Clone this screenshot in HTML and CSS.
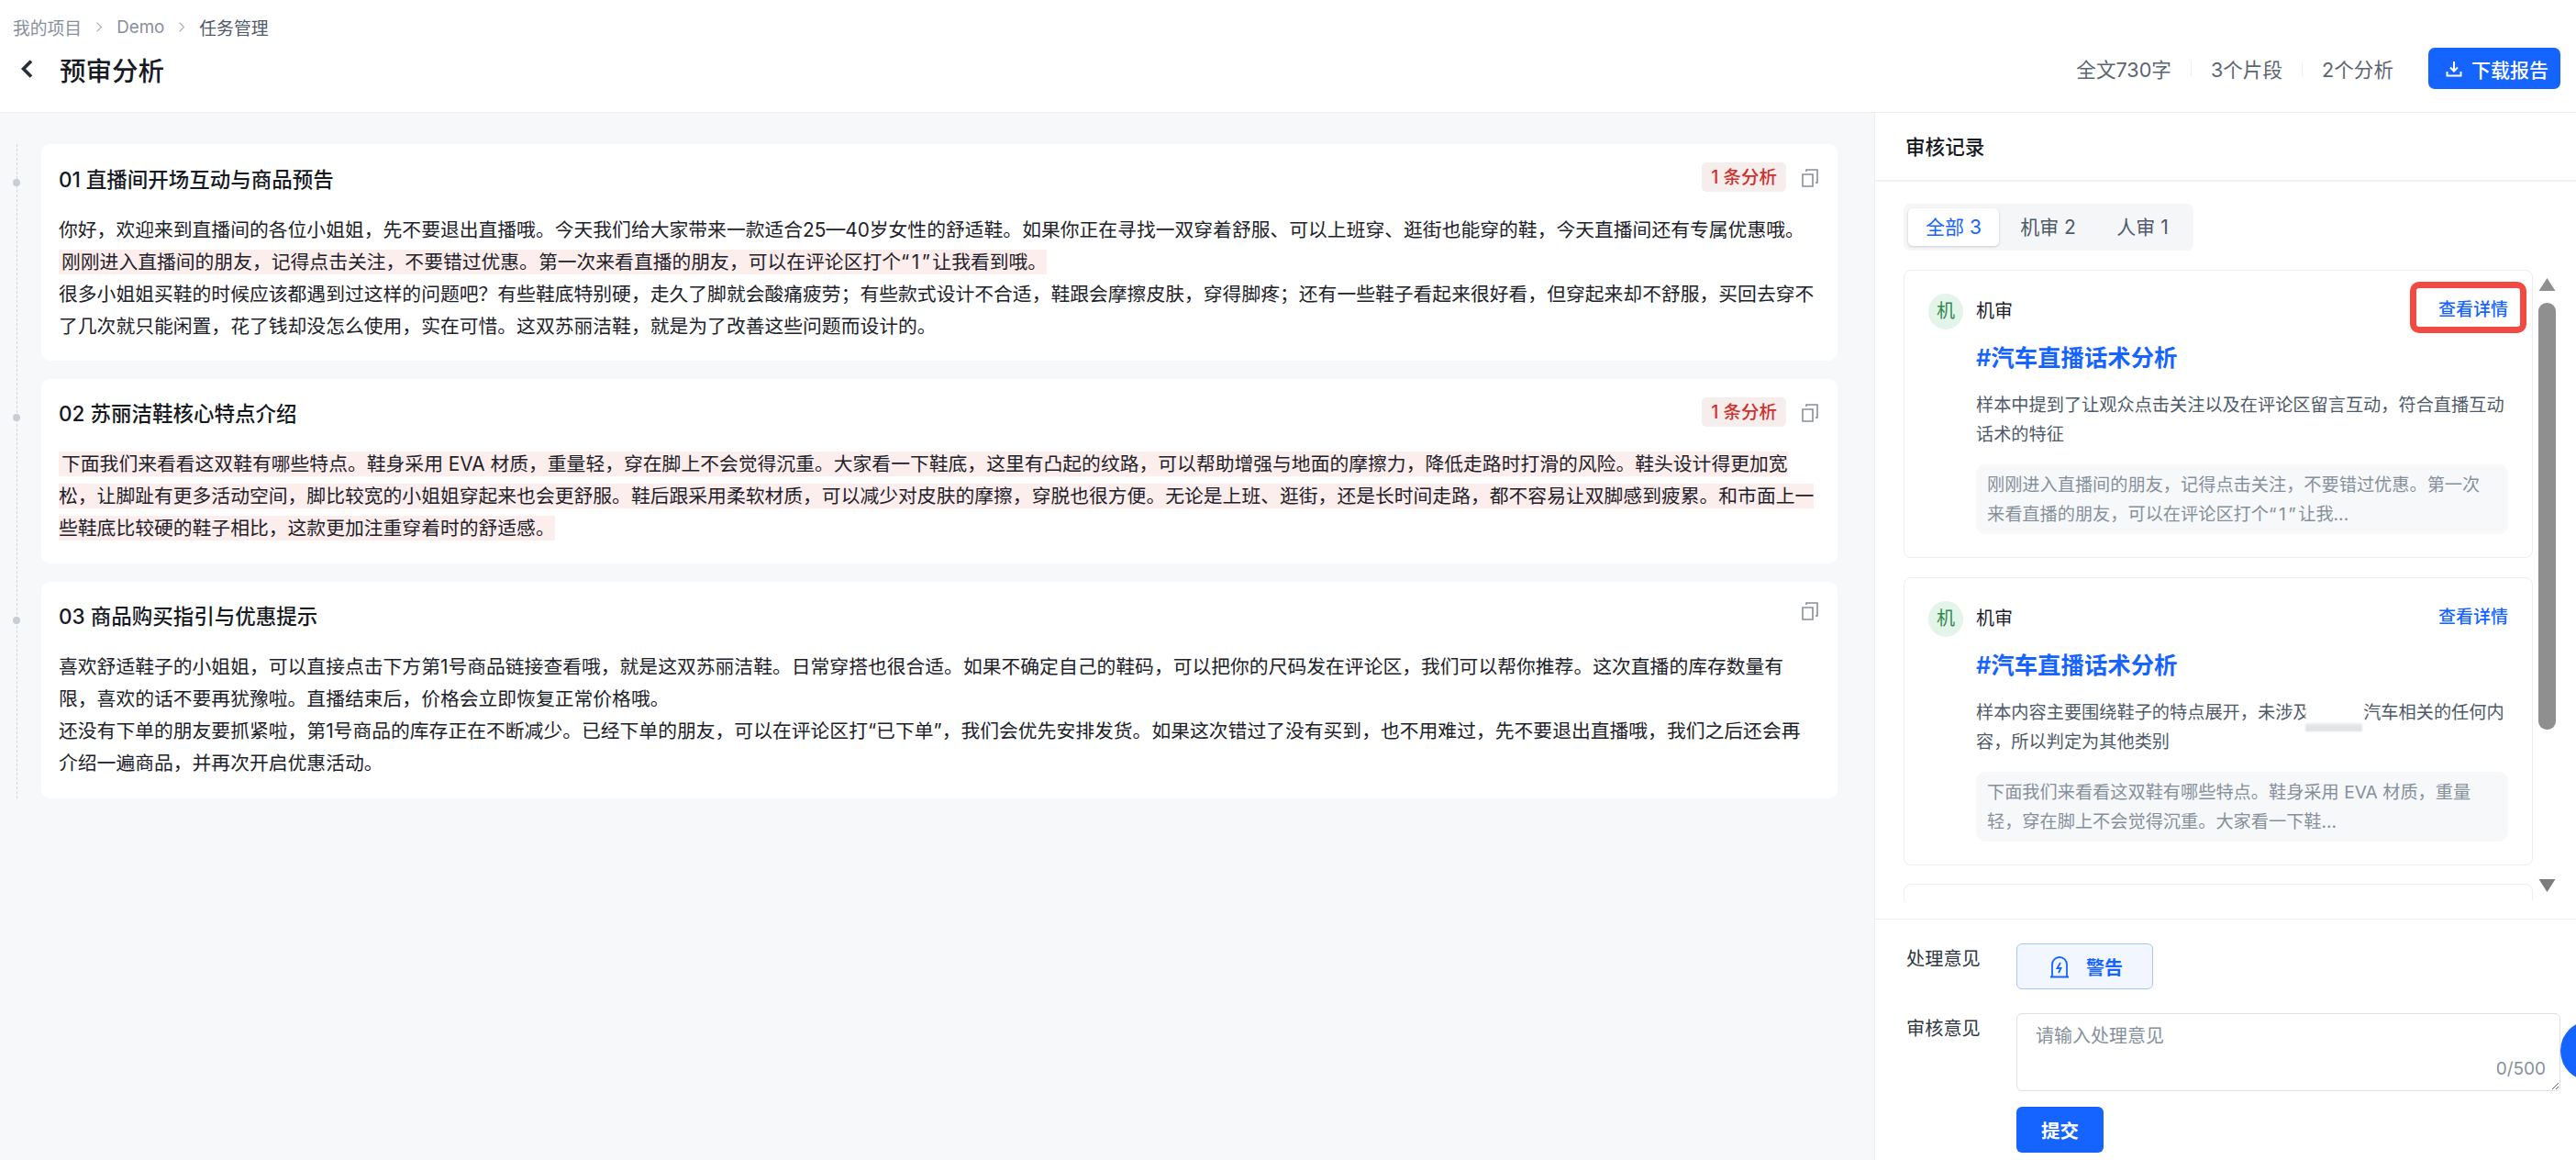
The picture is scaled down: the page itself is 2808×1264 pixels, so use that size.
FILE: index.html
```html
<!DOCTYPE html>
<html lang="zh-CN">
<head>
    <meta charset="UTF-8">
    <title>预审分析</title>
    <link rel="stylesheet" href="styles.css">
</head>
<body>
    <header class="top-bar">
        <div class="top-left">
            <div class="breadcrumb">
                <span>我的项目</span>
                <svg class="crumb-sep" viewBox="0 0 10 16"><path d="M2 2l6 6-6 6"/></svg>
                <span>Demo</span>
                <svg class="crumb-sep" viewBox="0 0 10 16"><path d="M2 2l6 6-6 6"/></svg>
                <span class="crumb-current">任务管理</span>
            </div>
            <div class="page-title">
                <svg class="back-icon" viewBox="0 0 14 20"><path d="M12 1.5L3.5 10l8.5 8.5"/></svg>
                <h1>预审分析</h1>
            </div>
        </div>
        <div class="top-right">
            <span class="stat">全文730字</span>
            <i class="stat-sep"></i>
            <span class="stat">3个片段</span>
            <i class="stat-sep"></i>
            <span class="stat">2个分析</span>
            <button class="download-btn">
                <svg viewBox="0 0 18 18"><path d="M9 1v10M5 7.5L9 11.5l4-4M1.5 12v4.5h15V12"/></svg>
                下载报告
            </button>
        </div>
    </header>

    <main class="workspace">
        <section class="content">
            <div class="segments">
                <article class="segment">
                    <div class="segment-head">
                        <h2>01 直播间开场互动与商品预告</h2>
                        <span class="badge">1 条分析</span>
                        <svg class="copy-icon" viewBox="0 0 18 20"><path d="M1 6h11v13H1zM5 3V1h12v14h-2"/></svg>
                    </div>
                    <p>你好，欢迎来到直播间的各位小姐姐，先不要退出直播哦。今天我们给大家带来一款适合25—40岁女性的舒适鞋。如果你正在寻找一双穿着舒服、可以上班穿、逛街也能穿的鞋，今天直播间还有专属优惠哦。<br><mark>刚刚进入直播间的朋友，记得点击关注，不要错过优惠。第一次来看直播的朋友，可以在评论区打个<span class="quoted">“1”</span>让我看到哦。</mark></p>
                    <p>很多小姐姐买鞋的时候应该都遇到过这样的问题吧？有些鞋底特别硬，走久了脚就会酸痛疲劳；有些款式设计不合适，鞋跟会摩擦皮肤，穿得脚疼；还有一些鞋子看起来很好看，但穿起来却不舒服，买回去穿不了几次就只能闲置，花了钱却没怎么使用，实在可惜。这双苏丽洁鞋，就是为了改善这些问题而设计的。</p>
                </article>
                <article class="segment">
                    <div class="segment-head">
                        <h2>02 苏丽洁鞋核心特点介绍</h2>
                        <span class="badge">1 条分析</span>
                        <svg class="copy-icon" viewBox="0 0 18 20"><path d="M1 6h11v13H1zM5 3V1h12v14h-2"/></svg>
                    </div>
                    <p><mark>下面我们来看看这双鞋有哪些特点。鞋身采用 EVA 材质，重量轻，穿在脚上不会觉得沉重。大家看一下鞋底，这里有凸起的纹路，可以帮助增强与地面的摩擦力，降低走路时打滑的风险。鞋头设计得更加宽松，让脚趾有更多活动空间，脚比较宽的小姐姐穿起来也会更舒服。鞋后跟采用柔软材质，可以减少对皮肤的摩擦，穿脱也很方便。无论是上班、逛街，还是长时间走路，都不容易让双脚感到疲累。和市面上一些鞋底比较硬的鞋子相比，这款更加注重穿着时的舒适感。</mark></p>
                </article>
                <article class="segment">
                    <div class="segment-head">
                        <h2>03 商品购买指引与优惠提示</h2>
                        <svg class="copy-icon solo" viewBox="0 0 18 20"><path d="M1 6h11v13H1zM5 3V1h12v14h-2"/></svg>
                    </div>
                    <p>喜欢舒适鞋子的小姐姐，可以直接点击下方第1号商品链接查看哦，就是这双苏丽洁鞋。日常穿搭也很合适。如果不确定自己的鞋码，可以把你的尺码发在评论区，我们可以帮你推荐。这次直播的库存数量有限，喜欢的话不要再犹豫啦。直播结束后，价格会立即恢复正常价格哦。</p>
                    <p>还没有下单的朋友要抓紧啦，第1号商品的库存正在不断减少。已经下单的朋友，可以在评论区打“已下单”，我们会优先安排发货。如果这次错过了没有买到，也不用难过，先不要退出直播哦，我们之后还会再介绍一遍商品，并再次开启优惠活动。</p>
                </article>
            </div>
        </section>

        <aside class="review-panel">
            <div class="panel-title">审核记录</div>
            <div class="tabs">
                <span class="tab active">全部 3</span>
                <span class="tab">机审 2</span>
                <span class="tab">人审 1</span>
            </div>

            <div class="records">
                <div class="record-list">
                    <div class="record">
                        <div class="record-head">
                            <span class="avatar">机</span>
                            <span class="record-name">机审</span>
                            <a class="record-link">查看详情</a>
                        </div>
                        <div class="record-body">
                            <div class="record-tag">#汽车直播话术分析</div>
                            <div class="record-desc">样本中提到了让观众点击关注以及在评论区留言互动，符合直播互动话术的特征</div>
                            <div class="record-quote">刚刚进入直播间的朋友，记得点击关注，不要错过优惠。第一次来看直播的朋友，可以在评论区打个<span class="quoted">“1”</span>让我...</div>
                        </div>
                        <i class="annotation"></i>
                    </div>
                    <div class="record">
                        <div class="record-head">
                            <span class="avatar">机</span>
                            <span class="record-name">机审</span>
                            <a class="record-link">查看详情</a>
                        </div>
                        <div class="record-body">
                            <div class="record-tag">#汽车直播话术分析</div>
                            <div class="record-desc">样本内容主要围绕鞋子的特点展开，未涉及<i class="redacted"></i>汽车相关的任何内容，所以判定为其他类别</div>
                            <div class="record-quote">下面我们来看看这双鞋有哪些特点。鞋身采用 EVA 材质，重量轻，穿在脚上不会觉得沉重。大家看一下鞋...</div>
                        </div>
                    </div>
                    <div class="record"></div>
                </div>
                <div class="scrollbar">
                    <svg class="scroll-arrow" viewBox="0 0 18 14"><path d="M9 0l9 14H0z"/></svg>
                    <div class="scroll-thumb"></div>
                    <svg class="scroll-arrow down" viewBox="0 0 18 14"><path d="M0 0h18L9 14z"/></svg>
                </div>
            </div>

            <form class="review-form">
                <label class="form-label">处理意见</label>
                <div>
                    <span class="action-chip">
                        <svg viewBox="0 0 22 25"><path d="M3 23V10a8 8 0 0 1 16 0v13M1 23.5h20M12 8l-3.5 6h4L10 19"/></svg>
                        警告
                    </span>
                </div>
                <label class="form-label">审核意见</label>
                <div class="textarea-wrap">
                    <textarea placeholder="请输入处理意见"></textarea>
                    <span class="counter">0/500</span>
                </div>
                <div class="form-actions">
                    <button class="submit-btn" type="button">提交</button>
                </div>
            </form>
        </aside>
    </main>

    <div class="float-ball"></div>
</body>
</html>
```

FILE: styles.css
```css
* {
    box-sizing: border-box;
}

html, body {
    height: 100%;
}

body {
    position: relative;
    margin: 0;
    overflow: hidden;
    background: #fff;
    color: #1d2129;
    font-family: Inter, "Noto Sans CJK SC", sans-serif;
}

/* top bar */
.top-bar {
    display: flex;
    justify-content: space-between;
    height: 123px;
    padding: 0 17px 0 14px;
    border-bottom: 1px solid #eceef1;
}

.breadcrumb {
    display: flex;
    align-items: center;
    height: 26px;
    margin-top: 16px;
    color: #86909c;
    font-size: 18.8px;
}

.crumb-sep {
    width: 8px;
    height: 13px;
    margin: 0 15px;
    fill: none;
    stroke: #a9aeb8;
    stroke-width: 1.5;
}

.crumb-current {
    color: #4e5969;
}

.page-title {
    display: flex;
    align-items: center;
    height: 38px;
    margin-top: 14px;
}

.back-icon {
    width: 14px;
    height: 20px;
    margin-left: 8px;
    fill: none;
    stroke: #272e3b;
    stroke-width: 3.6;
}

.page-title h1 {
    margin: 0 0 0 29px;
    color: #16191f;
    font-size: 28.5px;
    font-weight: 500;
}

.top-right {
    display: flex;
    align-items: center;
    align-self: flex-start;
    margin-top: 52px;
}

.stat {
    color: #5c6572;
    font-size: 21.6px;
}

.stat-sep {
    width: 1px;
    height: 16px;
    margin: 0 21px;
    background: #eceef1;
}

.download-btn {
    display: flex;
    align-items: center;
    gap: 10px;
    height: 45px;
    margin-left: 38px;
    padding: 0 13px 0 19px;
    border: none;
    border-radius: 7px;
    background: #1664ff;
    color: #fff;
    font-family: inherit;
    font-size: 21px;
    font-weight: 500;
}

.download-btn svg {
    width: 18px;
    height: 18px;
    fill: none;
    stroke: #fff;
    stroke-width: 2;
}

/* main area */
.workspace {
    display: flex;
    height: 1141px;
}

.content {
    width: 2043px;
    padding: 34px 40px 0 18px;
    background: #f7f8fa;
}

.segments {
    display: flex;
    flex-direction: column;
    gap: 20px;
    padding-left: 26px;
    border-left: 1px dashed #d3d6dc;
}

.segment {
    position: relative;
    padding: 20px 21px 20px 19px;
    border-radius: 10px;
    background: #fff;
}

.segment + .segment {
    padding-bottom: 21px;
}

.segment::before {
    content: "";
    position: absolute;
    left: -31px;
    top: 38px;
    width: 8px;
    height: 8px;
    border-radius: 50%;
    background: #c9cdd4;
}

.segment-head {
    display: flex;
    align-items: flex-start;
    height: 36px;
    margin-bottom: 20px;
}

.segment + .segment .segment-head {
    margin-bottom: 19px;
}

.segment-head h2 {
    flex: 1;
    margin: 1px 0 0;
    color: #16191f;
    font-size: 22.5px;
    font-weight: 500;
    line-height: 36px;
}

.segment + .segment h2 {
    margin-top: 0;
}

.badge {
    height: 32px;
    padding: 0 10px;
    border-radius: 5px;
    background: #f6eded;
    color: #d0312d;
    font-size: 19.5px;
    font-weight: 500;
    line-height: 32px;
}

.copy-icon {
    width: 18px;
    height: 20px;
    margin: 7px 0 0 17px;
    fill: none;
    stroke: #86909c;
    stroke-width: 1.6;
}

.copy-icon.solo {
    margin-top: 2px;
}

.segment p {
    margin: 0;
    color: #1d2129;
    font-size: 20.8px;
    line-height: 35px;
}

.segment mark {
    padding: 1px 0 1px 3px;
    background: #fdeeee;
    color: inherit;
}

.quoted {
    letter-spacing: 2.5px;
}

/* right panel */
.review-panel {
    display: flex;
    flex-direction: column;
    flex: 1;
    min-width: 0;
    border-left: 1px solid #eceef1;
}

.panel-title {
    flex: none;
    height: 75px;
    padding-left: 33px;
    border-bottom: 2px solid #eff1f4;
    color: #16191f;
    font-size: 21.6px;
    font-weight: 500;
    line-height: 75px;
}

.tabs {
    display: flex;
    flex: none;
    gap: 4px;
    align-self: flex-start;
    height: 51px;
    margin: 24px 0 0 31px;
    padding: 5px 6px 5px 5px;
    border-radius: 7px;
    background: #f5f6f8;
}

.tab {
    width: 99px;
    border-radius: 5px;
    color: #4e5969;
    font-size: 21px;
    line-height: 41px;
    text-align: center;
}

.tab.active {
    background: #fff;
    box-shadow: 0 1px 3px rgba(0, 0, 0, 0.18);
    color: #1664ff;
}

.records {
    display: flex;
    flex: none;
    height: 687px;
    margin-top: 21px;
    padding-left: 31px;
}

.record-list {
    display: flex;
    flex-direction: column;
    gap: 20.5px;
    width: 686px;
    overflow: hidden;
}

.record {
    position: relative;
    flex: none;
    height: 314px;
    padding: 25px 26px 0;
    border: 1px solid #eceef1;
    border-radius: 8px;
    background: #fff;
}

.record-head {
    display: flex;
    align-items: center;
    height: 39px;
}

.avatar {
    width: 38px;
    height: 39px;
    border-radius: 50%;
    background: #e3f4e8;
    color: #2f8a50;
    font-size: 20px;
    line-height: 39px;
    text-align: center;
}

.record-name {
    flex: 1;
    margin: 0 0 4px 14px;
    color: #1d2129;
    font-size: 20px;
}

.record-link {
    margin-bottom: 8px;
    color: #1664ff;
    font-size: 19px;
    font-weight: 500;
}

.record-body {
    padding-left: 52px;
}

.record-tag {
    margin-top: 13px;
    color: #1664ff;
    font-size: 25.4px;
    font-weight: 600;
    line-height: 36px;
}

.record-desc {
    margin-top: 17px;
    color: #4e5969;
    font-size: 19.2px;
    line-height: 32px;
}

/* the blurred-out patch sits in the text flow, 3 characters wide */
.redacted {
    display: inline-block;
    position: relative;
    width: 3em;
    height: 32px;
    vertical-align: top;
}

.redacted::after {
    content: "";
    position: absolute;
    left: -6px;
    top: -4px;
    width: 62px;
    height: 41px;
    background: linear-gradient(#fff 0, #fff 32px, #e6e7e9 33px, #dfe0e3 100%);
    filter: blur(1px);
}

.record-quote {
    margin-top: 17px;
    padding: 6px 12px;
    border-radius: 10px;
    background: #f7f8fa;
    color: #86909c;
    font-size: 19.2px;
    line-height: 32px;
}

.annotation {
    position: absolute;
    top: 12px;
    right: 6px;
    width: 127px;
    height: 56px;
    border: 7px solid #f04a43;
    border-radius: 10px;
}

.scrollbar {
    width: 19px;
    margin-left: 6px;
}

.scroll-arrow {
    display: block;
    width: 19px;
    height: 14px;
    margin-top: 9px;
    fill: #8f8f8f;
}

.scroll-arrow.down {
    margin-top: 163px;
    fill: #7c7c7c;
}

.scroll-thumb {
    height: 465px;
    margin-top: 13px;
    border-radius: 9px;
    background: #8f8f8f;
}

/* review form */
.review-form {
    display: grid;
    grid-template-columns: 120px 593px;
    grid-row-gap: 26px;
    flex: 1;
    align-content: flex-start;
    margin-top: 20px;
    padding: 26px 0 0 34px;
    border-top: 1px solid #eceef1;
}

.form-label {
    color: #2f3742;
    font-size: 20.2px;
    line-height: 34px;
}

.action-chip {
    display: flex;
    align-items: center;
    gap: 18px;
    width: 149px;
    height: 50px;
    padding-left: 35px;
    border: 1px solid #a9c4f5;
    border-radius: 6px;
    background: #f1f6ff;
    color: #1664ff;
    font-size: 20px;
    font-weight: 600;
}

.action-chip svg {
    width: 22px;
    height: 25px;
    fill: none;
    stroke: #1664ff;
    stroke-width: 1.8;
}

.textarea-wrap {
    position: relative;
    height: 85px;
}

.textarea-wrap textarea {
    display: block;
    width: 100%;
    height: 85px;
    padding: 8px 20px;
    border: 1px solid #dcdfe6;
    border-radius: 6px;
    outline: none;
    background: #fff;
    font-family: inherit;
    font-size: 20px;
    line-height: 32px;
}

.textarea-wrap textarea::placeholder {
    color: #86909c;
}

.counter {
    position: absolute;
    right: 16px;
    bottom: 10px;
    color: #86909c;
    font-size: 19px;
    line-height: 28px;
}

.form-actions {
    grid-column: 2;
    margin-top: -9px;
}

.submit-btn {
    width: 95px;
    height: 50px;
    border: none;
    border-radius: 6px;
    background: #1664ff;
    color: #fff;
    font-family: inherit;
    font-size: 20.5px;
    font-weight: 600;
}

/* floating helper, cut off by the window edge */
.float-ball {
    position: absolute;
    left: 2791px;
    top: 1112px;
    width: 66px;
    height: 66px;
    border-radius: 50%;
    background: #1664ff;
}
```
